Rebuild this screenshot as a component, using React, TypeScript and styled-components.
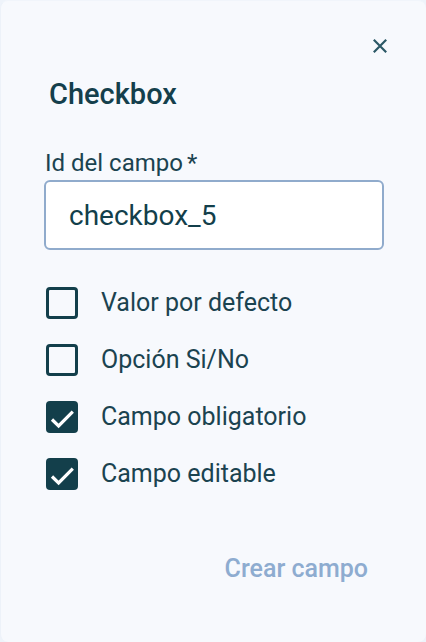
import styled, { createGlobalStyle } from "styled-components";

const GlobalStyle = createGlobalStyle`
    html, body {
        margin: 0;
        padding: 0;
        background: #eef3fa;
    }
    body {
        font-family: Roboto, "Noto Sans", Arial, sans-serif;
    }
`;

interface FieldOption {
    label: string;
    checked: boolean;
}

const options: FieldOption[] = [
    { label: "Valor por defecto", checked: false },
    { label: "Opción Si/No", checked: false },
    { label: "Campo obligatorio", checked: true },
    { label: "Campo editable", checked: true },
];

export default function App() {
    return (
        <>
            <GlobalStyle />
            <Panel>
                <TopBar>
                    <CloseBtn aria-label="Cerrar">
                        <svg width="24" height="24" viewBox="0 0 24 24">
                            <path
                                d="M5.8 5.8l12.4 12.4M18.2 5.8L5.8 18.2"
                                fill="none"
                                stroke="#2b5866"
                                strokeWidth="2.2"
                            />
                        </svg>
                    </CloseBtn>
                </TopBar>
                <Title>Checkbox</Title>

                <Field>
                    <Label>
                        Id del campo<Star>*</Star>
                    </Label>
                    <Input defaultValue="checkbox_5" />
                </Field>

                <List>
                    {options.map((o) => (
                        <Row key={o.label}>
                            <Box $checked={o.checked}>
                                {o.checked && (
                                    <svg width="32" height="32" viewBox="0 0 32 32">
                                        <path
                                            d="M6 18.5l6.6 6.4L26.8 10.6"
                                            fill="none"
                                            stroke="#ffffff"
                                            strokeWidth="3.2"
                                        />
                                    </svg>
                                )}
                            </Box>
                            <RowLabel>{o.label}</RowLabel>
                        </Row>
                    ))}
                </List>

                <Footer>
                    <CreateBtn>Crear campo</CreateBtn>
                </Footer>
            </Panel>
        </>
    );
}

const Panel = styled.div`
    box-sizing: border-box;
    width: 426px;
    height: 642px;
    background: #f7f9fd;
    border-radius: 8px;
    border-left: 1px solid #edf2f9;
    border-top: 1px solid #f1f5fb;
    padding: 0 42px 0 43px;
    display: flex;
    flex-direction: column;
    color: #133f4b;
`;

const TopBar = styled.div`
    display: flex;
    justify-content: flex-end;
    padding-top: 33px;
    margin-right: -8px;
`;

const CloseBtn = styled.button`
    border: none;
    background: none;
    padding: 0;
    width: 24px;
    height: 24px;
    cursor: pointer;
    display: flex;
`;

const Title = styled.h2`
    margin: 19px 0 0 5px;
    font-size: 29px;
    font-weight: 500;
    line-height: 34px;
    color: #143f4c;
`;

const Field = styled.div`
    display: flex;
    flex-direction: column;
    margin-top: 38px;
`;

const Label = styled.label`
    font-size: 24px;
    line-height: 28px;
    margin-left: 1px;
    color: #1b4350;
`;

const Star = styled.span`
    margin-left: 4px;
`;

const Input = styled.input`
    box-sizing: border-box;
    margin-top: 3px;
    width: 340px;
    height: 70px;
    border: 2px solid #90abcc;
    border-radius: 6px;
    background: #ffffff;
    padding: 0 23px;
    font-family: Roboto, "Noto Sans", Arial, sans-serif;
    font-size: 28px;
    color: #133f4b;
    outline: none;
`;

const List = styled.div`
    display: flex;
    flex-direction: column;
    gap: 25px;
    margin-top: 37px;
    padding-left: 2px;
`;

const Row = styled.div`
    display: flex;
    align-items: center;
    gap: 23px;
    height: 32px;
`;

const Box = styled.span<{ $checked: boolean }>`
    box-sizing: border-box;
    width: 32px;
    height: 32px;
    border-radius: 4px;
    border: ${(p) => (p.$checked ? "0" : "3px solid #133f4b")};
    background: ${(p) => (p.$checked ? "#133f4b" : "transparent")};
    display: flex;
    align-items: center;
    justify-content: center;
    flex-shrink: 0;
`;

const RowLabel = styled.span`
    font-size: 25px;
    line-height: 30px;
    color: #1b4350;
`;

const Footer = styled.div`
    display: flex;
    justify-content: flex-end;
    margin-top: 64px;
    padding-right: 16px;
`;

const CreateBtn = styled.button`
    border: none;
    background: none;
    padding: 0;
    font-family: Roboto, "Noto Sans", Arial, sans-serif;
    font-size: 25px;
    line-height: 30px;
    font-weight: 500;
    color: #8eacd0;
    cursor: pointer;
`;
